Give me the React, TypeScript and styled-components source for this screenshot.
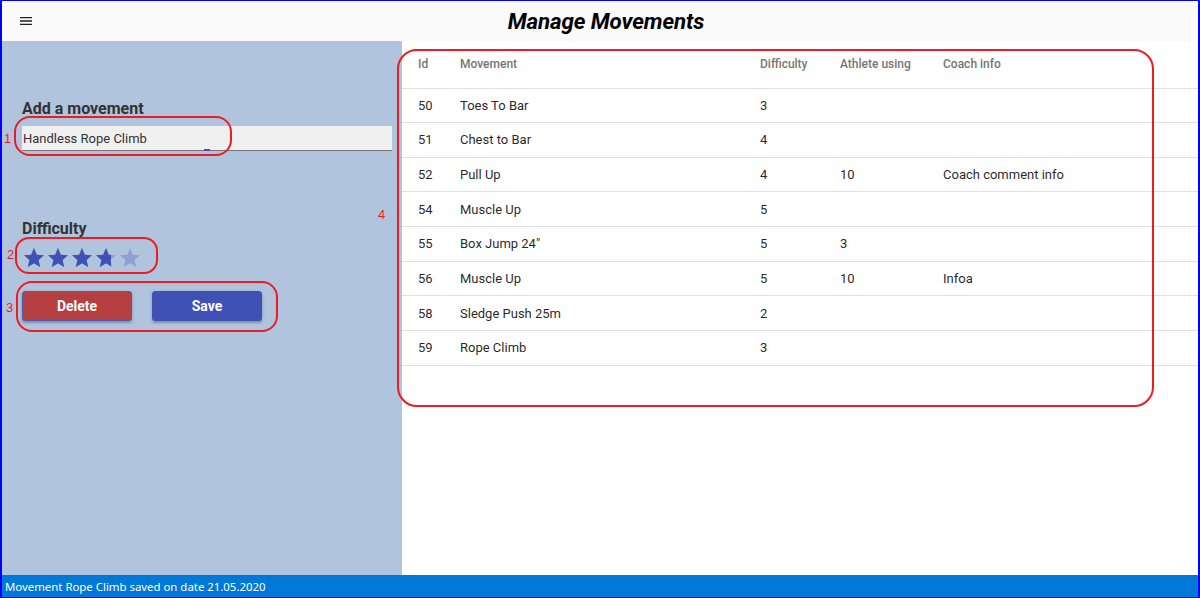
import React from "react";
import styled, { createGlobalStyle } from "styled-components";

const GlobalStyle = createGlobalStyle`
  html, body { margin: 0; padding: 0; }
  body { font-family: Roboto, "Liberation Sans", sans-serif; background: #fff; }
  * { box-sizing: border-box; }
`;

const Frame = styled.div`
  position: relative;
  width: 1200px;
  height: 598px;
  border-left: 2px solid #0000ff;
  border-right: 2px solid #0000ff;
  border-top: 1px solid #0000ff;
  border-bottom: 1px solid #0000c8;
  display: flex;
  flex-direction: column;
  overflow: hidden;
`;

const Header = styled.header`
  height: 40px;
  flex: none;
  background: #fafafa;
  display: flex;
  align-items: center;
`;

const MenuButton = styled.div`
  width: 48px;
  height: 40px;
  display: flex;
  align-items: center;
  padding-left: 16px;
  color: #222;
`;

const Title = styled.h1`
  flex: 1;
  margin: 0;
  padding-right: 36px;
  text-align: center;
  font-family: Roboto, sans-serif;
  font-size: 22.3px;
  font-weight: 700;
  font-style: italic;
  color: #000;
  letter-spacing: -0.1px;
`;

const Main = styled.main`
  flex: 1;
  display: flex;
  min-height: 0;
`;

const LeftPanel = styled.section`
  width: 400px;
  flex: none;
  background: #b0c4de;
  padding: 58px 10px 0 20px;
  display: flex;
  flex-direction: column;
`;

const SectionTitle = styled.h2<{ $gap: number }>`
  margin: ${(p) => p.$gap}px 0 0 0;
  font-size: 16px;
  line-height: 20px;
  font-weight: 700;
  color: #333;
`;

const InputWrap = styled.div`
  position: relative;
  margin-top: 7px;
  height: 25px;
  background: #f0f0f0;
  border-bottom: 1px solid #757575;
`;

const TextInput = styled.input`
  width: 100%;
  height: 24px;
  border: none;
  outline: none;
  background: transparent;
  padding: 0 0 0 1px;
  font-family: Roboto, sans-serif;
  font-size: 13px;
  color: #333;
`;

const FocusMark = styled.span`
  position: absolute;
  left: 182px;
  bottom: -1px;
  width: 6px;
  height: 2px;
  background: #3f51b5;
`;

const Stars = styled.div`
  margin-top: 7px;
  display: flex;
  height: 24px;
`;

const StarBox = styled.span`
  position: relative;
  width: 24px;
  height: 24px;
  display: block;
`;

const StarLayer = styled.span<{ $fill: number; $light?: boolean }>`
  position: absolute;
  left: 0;
  top: 0;
  height: 24px;
  width: ${(p) => p.$fill * 24}px;
  overflow: hidden;
  color: ${(p) => (p.$light ? "rgba(63, 81, 181, 0.3)" : "#3f51b5")};
  svg { display: block; }
`;

const Buttons = styled.div`
  margin-top: 21px;
  display: flex;
  gap: 20px;
`;

const Button = styled.button<{ $variant: "danger" | "primary" }>`
  width: 110px;
  height: 30px;
  border-radius: 3px;
  border: 1px solid ${(p) => (p.$variant === "danger" ? "#4d5bb0" : "#3f51b5")};
  background: ${(p) => (p.$variant === "danger" ? "#b53f41" : "#3f51b5")};
  color: #fff;
  font-family: Roboto, sans-serif;
  font-size: 14px;
  font-weight: 700;
  box-shadow: 0 2px 2px rgba(0, 0, 0, 0.2), 0 1px 4px rgba(0, 0, 0, 0.12);
  cursor: pointer;
`;

const RightPanel = styled.section`
  flex: 1;
  background: #fff;
`;

const Row = styled.div<{ $head?: boolean }>`
  display: grid;
  grid-template-columns: 42px 300px 80px 103px 1fr;
  align-items: center;
  padding-left: 16px;
  height: ${(p) => (p.$head ? "47.5px" : "34.65px")};
  border-bottom: 1px solid #e0e0e0;
  font-size: ${(p) => (p.$head ? "12px" : "13px")};
  font-weight: ${(p) => (p.$head ? 500 : 400)};
  color: ${(p) => (p.$head ? "#757575" : "rgba(0,0,0,0.87)")};
`;

const Cell = styled.span`
  white-space: nowrap;
`;

const StatusBar = styled.footer`
  height: 22px;
  flex: none;
  background: #0078d7;
  color: #fff;
  font-family: "Noto Sans", "Open Sans", sans-serif;
  font-size: 11.4px;
  display: flex;
  align-items: center;
  padding-left: 3px;
`;

const Annotation = styled.div<{ $r: number }>`
  position: absolute;
  border: 2px solid #ed1c24;
  border-radius: ${(p) => p.$r}px;
  pointer-events: none;
`;

const AnnotationLabel = styled.span`
  position: absolute;
  font-family: "Liberation Sans", Arial, sans-serif;
  font-size: 13px;
  line-height: 14px;
  color: #ed1c24;
`;

const StarIcon = () => (
  <svg width="24" height="24" viewBox="0 0 24 24" fill="currentColor">
    <path d="M12 17.27L18.18 21l-1.64-7.03L22 9.24l-7.19-.61L12 2 9.19 8.63 2 9.24l5.46 4.73L5.82 21z" />
  </svg>
);

const MenuIcon = () => (
  <svg width="16" height="16" viewBox="0 0 24 24" fill="currentColor">
    <path d="M3 18h18v-2H3v2zm0-5h18v-2H3v2zm0-7v2h18V6H3z" />
  </svg>
);

const rows = [
  { id: 50, name: "Toes To Bar", diff: 3, ath: "", info: "" },
  { id: 51, name: "Chest to Bar", diff: 4, ath: "", info: "" },
  { id: 52, name: "Pull Up", diff: 4, ath: "10", info: "Coach comment info" },
  { id: 54, name: "Muscle Up", diff: 5, ath: "", info: "" },
  { id: 55, name: "Box Jump 24\"", diff: 5, ath: "3", info: "" },
  { id: 56, name: "Muscle Up", diff: 5, ath: "10", info: "Infoa" },
  { id: 58, name: "Sledge Push 25m", diff: 2, ath: "", info: "" },
  { id: 59, name: "Rope Climb", diff: 3, ath: "", info: "" },
];

const rating = 3.72;

const annotations = [
  { left: 12, top: 115, width: 218, height: 40, r: 16 },
  { left: 13, top: 236, width: 143, height: 37, r: 14 },
  { left: 14, top: 280, width: 262, height: 51, r: 16 },
  { left: 395, top: 48, width: 757, height: 358, r: 20 },
];

const labels = [
  { text: "1", left: 2, top: 131 },
  { text: "2", left: 5, top: 247 },
  { text: "3", left: 4, top: 300 },
  { text: "4", left: 376, top: 207 },
];

export default function App() {
  return (
    <>
      <GlobalStyle />
      <Frame>
        <Header>
          <MenuButton>
            <MenuIcon />
          </MenuButton>
          <Title>Manage Movements</Title>
        </Header>
        <Main>
          <LeftPanel>
            <SectionTitle $gap={0}>Add a movement</SectionTitle>
            <InputWrap>
              <TextInput defaultValue="Handless Rope Climb" />
              <FocusMark />
            </InputWrap>
            <SectionTitle $gap={68}>Difficulty</SectionTitle>
            <Stars>
              {[1, 2, 3, 4, 5].map((n) => {
                const fill = Math.max(0, Math.min(1, rating - (n - 1)));
                return (
                  <StarBox key={n}>
                    <StarLayer $fill={1} $light>
                      <StarIcon />
                    </StarLayer>
                    {fill > 0 && (
                      <StarLayer $fill={fill}>
                        <StarIcon />
                      </StarLayer>
                    )}
                  </StarBox>
                );
              })}
            </Stars>
            <Buttons>
              <Button $variant="danger">Delete</Button>
              <Button $variant="primary">Save</Button>
            </Buttons>
          </LeftPanel>
          <RightPanel>
            <Row $head>
              <Cell>Id</Cell>
              <Cell>Movement</Cell>
              <Cell>Difficulty</Cell>
              <Cell>Athlete using</Cell>
              <Cell>Coach info</Cell>
            </Row>
            {rows.map((r) => (
              <Row key={r.id}>
                <Cell>{r.id}</Cell>
                <Cell>{r.name}</Cell>
                <Cell>{r.diff}</Cell>
                <Cell>{r.ath}</Cell>
                <Cell>{r.info}</Cell>
              </Row>
            ))}
          </RightPanel>
        </Main>
        <StatusBar>Movement Rope Climb saved on date 21.05.2020</StatusBar>
        {annotations.map((a, i) => (
          <Annotation
            key={i}
            $r={a.r}
            style={{ left: a.left, top: a.top, width: a.width, height: a.height }}
          />
        ))}
        {labels.map((l) => (
          <AnnotationLabel key={l.text} style={{ left: l.left, top: l.top }}>
            {l.text}
          </AnnotationLabel>
        ))}
      </Frame>
    </>
  );
}
